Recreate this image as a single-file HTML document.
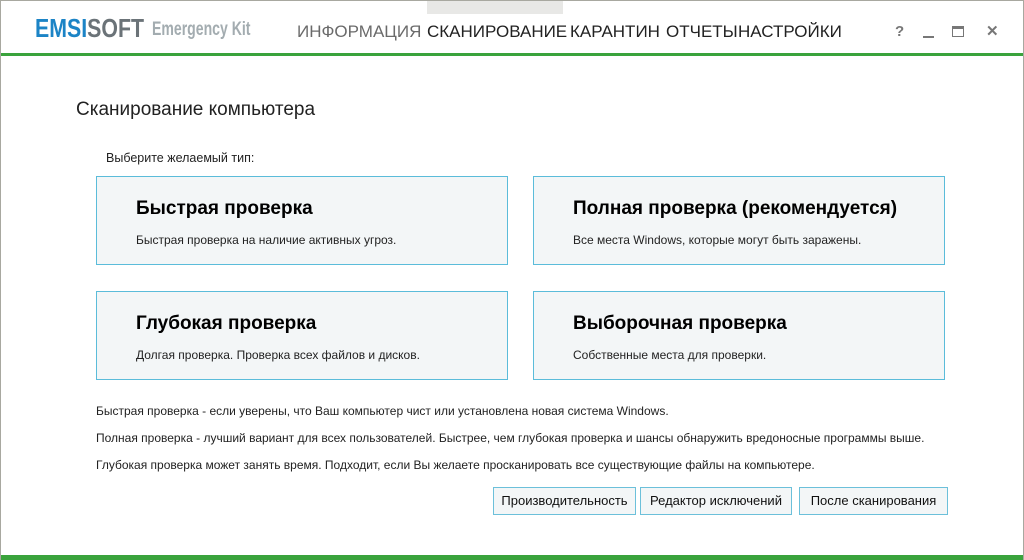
<!DOCTYPE html>
<html><head><meta charset="utf-8"><style>
*{margin:0;padding:0;box-sizing:border-box}
body{width:1024px;height:560px;overflow:hidden;background:#fff;font-family:"Liberation Sans",sans-serif;color:#1a1a1a;position:relative}
.frame{position:absolute;left:0;top:0;width:1024px;height:560px;border:1px solid #a8a8a0;border-bottom:none}
.green{position:absolute;left:1px;right:1px;height:3px;background:#3aa33c}
.abs{position:absolute;white-space:nowrap}
.logo{left:35px;top:13px;font-family:"Liberation Sans",sans-serif;font-weight:bold;font-size:26px;transform:scaleX(0.82);transform-origin:left}
.kit{left:152px;top:19px;font-family:"Liberation Sans",sans-serif;font-weight:bold;font-size:19px;color:#a3acb0;transform:scaleX(0.74);transform-origin:left}
.nav{top:22px;font-family:"Liberation Sans",sans-serif;font-size:17px;color:#222}
.card{position:absolute;width:412px;height:89px;border:1px solid #5bbcda;background:#f3f6f7}
.card h2{position:absolute;left:39px;top:21px;font-size:19px;font-weight:bold;color:#000}
.card p{position:absolute;left:39px;top:56px;font-size:12px;color:#222}
.note{left:96px;font-size:12px;color:#222}
.btn{position:absolute;top:487px;height:28px;border:1px solid #6cc0da;background:#f3f6f7;font-size:13px;text-align:center;line-height:26px;color:#111}
</style></head><body>
<div class="frame"></div>
<div class="abs" style="left:427px;top:1px;width:136px;height:13px;background:#e8e8e6"></div>
<div class="abs logo"><span style="color:#1c84c6">EMSI</span><span style="color:#6b7378">SOFT</span></div>
<div class="abs kit">Emergency Kit</div>
<div class="abs nav" style="left:297px;color:#6a6a6a">ИНФОРМАЦИЯ</div>
<div class="abs nav" style="left:427px">СКАНИРОВАНИЕ</div>
<div class="abs nav" style="left:570px">КАРАНТИН</div>
<div class="abs nav" style="left:666px">ОТЧЕТЫ</div>
<div class="abs nav" style="left:738px">НАСТРОЙКИ</div>
<div class="abs" style="left:895px;top:23px;font-size:15px;font-weight:bold;color:#777">?</div>
<div class="abs" style="left:923px;top:36px;width:11px;height:2px;background:#777"></div>
<div class="abs" style="left:952px;top:26px;width:12px;height:11px;border:1.5px solid #777;border-top-width:3px"></div>
<div class="abs" style="left:986px;top:22px;font-size:15px;font-weight:bold;color:#777">✕</div>
<div class="green" style="top:53px"></div>
<div class="abs" style="left:76px;top:99px;font-size:19px;color:#222">Сканирование компьютера</div>
<div class="abs" style="left:106px;top:151px;font-size:12.5px;color:#222">Выберите желаемый тип:</div>
<div class="card" style="left:96px;top:176px"><h2>Быстрая проверка</h2><p>Быстрая проверка на наличие активных угроз.</p></div>
<div class="card" style="left:533px;top:176px"><h2>Полная проверка (рекомендуется)</h2><p>Все места Windows, которые могут быть заражены.</p></div>
<div class="card" style="left:96px;top:291px"><h2>Глубокая проверка</h2><p>Долгая проверка. Проверка всех файлов и дисков.</p></div>
<div class="card" style="left:533px;top:291px"><h2>Выборочная проверка</h2><p>Собственные места для проверки.</p></div>
<div class="abs note" style="top:404px">Быстрая проверка - если уверены, что Ваш компьютер чист или установлена новая система Windows.</div>
<div class="abs note" style="top:431px">Полная проверка - лучший вариант для всех пользователей. Быстрее, чем глубокая проверка и шансы обнаружить вредоносные программы выше.</div>
<div class="abs note" style="top:458px">Глубокая проверка может занять время. Подходит, если Вы желаете просканировать все существующие файлы на компьютере.</div>
<div class="btn" style="left:493px;width:143px">Производительность</div>
<div class="btn" style="left:640px;width:152px">Редактор исключений</div>
<div class="btn" style="left:799px;width:149px">После сканирования</div>
<div class="green" style="top:555px;height:5px"></div>
</body></html>
